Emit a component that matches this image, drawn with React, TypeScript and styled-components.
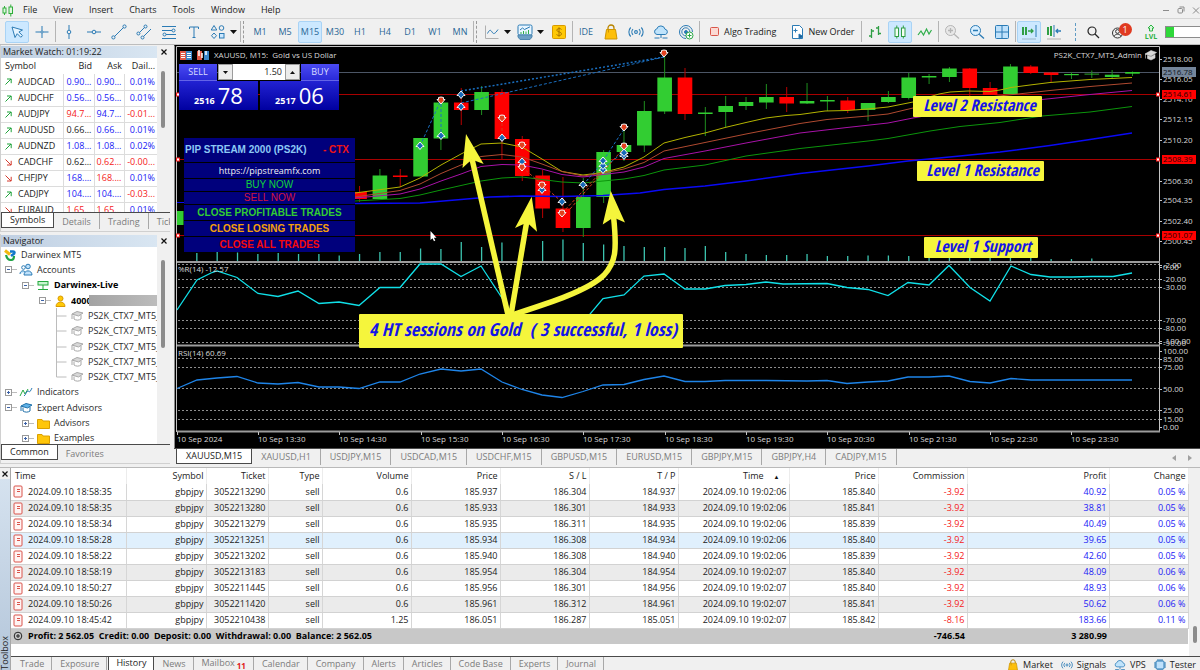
import React from 'react';
import styled, { createGlobalStyle, css } from 'styled-components';

const GlobalStyle = createGlobalStyle`
  * { box-sizing: border-box; }
  body {
    margin: 0;
    background: #f0f0f0;
    font-family: "Open Sans", "Noto Sans", sans-serif;
    font-size: 9px;
    line-height: 12px;
    color: #222;
    overflow: hidden;
  }
  button, input {
    font: inherit;
    color: inherit;
    margin: 0;
    padding: 0;
    border: 0;
    border-radius: 0;
    background: none;
  }
`;

const Page = styled.div`
  display: flex;
  flex-direction: column;
`;

/* ---------- menu bar ---------- */

const MenuBar = styled.nav`
  display: flex;
  align-items: center;
  height: 19px;
  padding: 2px 2px 0;
  border-bottom: 1px solid #d6d6d6;
`;

const MenuItem = styled.button`
  height: 15px;
  padding: 0 8px;
  color: #1c1c1c;
`;

const Logo = styled.svg`
  width: 12px;
  height: 13px;
  margin-right: 1px;
`;

const WindowButtons = styled.div`
  display: flex;
  gap: 5px;
  margin-left: auto;
  margin-right: -3px;
`;

const WindowButton = styled.button`
  width: 10px;
  height: 12px;
  svg { display: block; }
`;

/* ---------- tool bar ---------- */

const ToolBar = styled.div`
  display: flex;
  align-items: center;
  height: 26px;
  padding-left: 5px;
  gap: 1px;
  border-bottom: 1px solid #bdbdbd;
`;

const Tool = styled.button<{ $active?: boolean; $wide?: boolean }>`
  display: flex;
  align-items: center;
  justify-content: center;
  gap: 4px;
  flex: none;
  width: ${(p) => (p.$wide ? 32 : 24)}px;
  height: 22px;
  border: 1px solid ${(p) => (p.$active ? '#a9d3f5' : 'transparent')};
  border-radius: 2px;
  background: ${(p) => (p.$active ? '#cce8ff' : 'transparent')};
  color: #2a6796;
  svg { display: block; flex: none; }
`;

const TextTool = styled(Tool)`
  width: auto;
  padding: 0 4px 0 8px;
  color: #1a1a1a;
  white-space: nowrap;
`;

const Separator = styled.span`
  flex: none;
  width: 1px;
  height: 21px;
  background: #b4b4b4;
`;

const Gripper = styled.span`
  flex: none;
  width: 2px;
  height: 22px;
  margin: 0 2px 0 1px;
  border-left: 1px dashed #9a9a9a;
`;

const StatusGroup = styled.div`
  flex: 1;
  display: flex;
  align-items: center;
  height: 18px;
  gap: 2px;
  margin-left: 8px;
  padding-left: 5px;
  border-left: 1px dashed #5f9bc4;
`;

const Account = styled.span`
  position: relative;
  display: flex;
  margin-right: 6px;
`;

const Badge = styled.span`
  position: absolute;
  top: 2px;
  right: -1px;
  width: 13px;
  height: 13px;
  border-radius: 7px;
  background: #e03a20;
  color: #fff;
  line-height: 13px;
  text-align: center;
`;

const LevelMeter = styled.div`
  flex: 1;
  height: 12px;
  border: 1px solid #8c8c8c;
  border-right: 0;
  background: linear-gradient(to right, #2fd83a 8px, #fff 8px);
`;

/* ---------- docked panels ---------- */

const Workspace = styled.main`
  display: flex;
  align-items: stretch;
`;

const Dock = styled.aside`
  flex: none;
  width: 174px;
  display: flex;
  flex-direction: column;
  gap: 2px;
  padding-right: 4px;
`;

const Panel = styled.section`
  border-bottom: 1px solid #d0d0d0;
  border-left: 1px solid #d0d0d0;
`;

const PanelTitle = styled.header`
  display: flex;
  align-items: center;
  height: 13px;
  h2 {
    flex: 1;
    margin: 0;
    padding-left: 2px;
    font-size: 9px;
    font-weight: 400;
    background: linear-gradient(to right, #bfcfe2, #d9e6f2);
  }
  button {
    width: 13px;
    height: 12px;
  }
  svg { display: block; margin: auto; }
`;

const PanelBody = styled.div<{ $height: number }>`
  display: flex;
  height: ${(p) => p.$height}px;
  overflow: hidden;
  background: #fff;
`;

const ScrollTrack = styled.div<{ $offset: number }>`
  flex: none;
  width: 13px;
  padding: ${(p) => p.$offset}px 5px 0 4px;
  background: #f0f0f0;
`;

const ScrollThumb = styled.div<{ $length: number }>`
  height: ${(p) => p.$length}px;
  border-radius: 2px;
  background: #8c8c8c;
`;

const Tabs = styled.div`
  display: flex;
  height: 17px;
  overflow: hidden;
  border-top: 1px solid #4a4a4a;
`;

const Tab = styled.button<{ $active?: boolean }>`
  flex: none;
  height: 16px;
  padding: 0 8px;
  color: #7c7c7c;
  white-space: nowrap;
  line-height: 13px;
  border-right: 1px solid #a8a8a8;
  ${(p) =>
    p.$active &&
    css`
      margin-top: -1px;
      color: #1c1c1c;
      background: #fff;
      border: 1px solid #4a4a4a;
      border-top: 0;
    `}
`;

const DockTabs = styled(Tabs)`
  margin-bottom: 2px;
  button:last-child { border-right: 0; }
`;

/* ---------- market watch ---------- */

const QuoteTable = styled.table`
  flex: 1;
  table-layout: fixed;
  border-collapse: collapse;
  align-self: flex-start;
  th, td {
    height: 16px;
    padding: 0 2px;
    text-align: right;
    font-weight: 400;
    white-space: nowrap;
  }
  td {
    border-bottom: 1px solid #dcdcdc;
    border-right: 1px solid #dcdcdc;
  }
  td:last-child { border-right: 0; }
  th:first-child, td:first-child { text-align: left; padding-left: 4px; }
`;

const Quote = styled.td<{ $tone: string }>`
  color: ${(p) => p.$tone};
`;

const SymbolName = styled.span`
  display: flex;
  align-items: center;
  gap: 6px;
`;

/* ---------- navigator ---------- */

const Tree = styled.ul`
  flex: 1;
  min-width: 0;
  height: 199px;
  margin: 0;
  padding: 0;
  display: flex;
  flex-direction: column;
  list-style: none;
`;

const TreeRow = styled.li<{ $depth: number; $bold?: boolean }>`
  flex: 1;
  display: flex;
  align-items: center;
  min-width: 0;
  padding-left: ${(p) => 4 + p.$depth * 17}px;
  white-space: nowrap;
  overflow: hidden;
  font-weight: ${(p) => (p.$bold ? 700 : 400)};
  color: ${(p) => (p.$bold ? '#000' : '#2b2b2b')};
  svg { flex: none; }
`;

const TreeRoot = styled(TreeRow)`
  padding-left: 2px;
`;

const TreeIcon = styled.span`
  flex: none;
  display: flex;
  justify-content: center;
  width: 14px;
  margin-right: 4px;
`;

const Twig = styled.span`
  flex: none;
  display: flex;
  width: 14px;
`;

const AccountNumber = styled.span`
  width: 18px;
  overflow: hidden;
`;

const Redaction = styled.span`
  flex: 1;
  height: 11px;
  background: linear-gradient(to right, #a3a3a3, #bcbcbc);
`;

/* ---------- chart ---------- */

const ChartArea = styled.section`
  flex: 1;
  min-width: 0;
  display: flex;
  flex-direction: column;
`;

const ChartCanvas = styled.div`
  position: relative;
  background: #000;
  svg.plot { display: block; width: 100%; height: auto; }
`;

const Ticket = styled.form`
  position: absolute;
  left: 5px;
  top: 19px;
  width: 160px;
  display: grid;
  grid-template-columns: 38px minmax(0, 1fr) 38px;
  column-gap: 1px;
`;

const Side = styled.button`
  height: 17px;
  color: #d9dcff;
  background: linear-gradient(#4a4af2, #2a2ad8);
  border-bottom: 1px solid #6464e8;
`;

const Lots = styled.div`
  display: flex;
  height: 16px;
  background: #fff;
  button {
    flex: none;
    width: 15px;
    background: #ececec;
    border: 1px solid #9c9c9c;
  }
  svg { display: block; margin: auto; }
  input {
    flex: 1;
    width: 100%;
    min-width: 0;
    padding-right: 3px;
    text-align: right;
    color: #1c1c1c;
  }
`;

const Prices = styled.div`
  grid-column: 1 / -1;
  display: grid;
  grid-template-columns: 1fr 1fr;
  gap: 2px;
`;

const PriceButton = styled.button`
  display: flex;
  align-items: flex-end;
  justify-content: center;
  gap: 3px;
  height: 29px;
  padding-bottom: 2px;
  color: #fff;
  background: linear-gradient(#2222d2, #0000a0);
  small { font-size: 9px; font-weight: 700; line-height: 14px; }
  span { font-size: 22px; line-height: 26px; }
`;

const Robot = styled.div`
  position: absolute;
  left: 10px;
  top: 93px;
  width: 171px;
  display: flex;
  flex-direction: column;
  gap: 1px;
  font-family: "Liberation Sans", Arial, sans-serif;
  font-size: 10px;
  text-align: center;
`;

const RobotTitle = styled.div`
  display: flex;
  justify-content: space-between;
  height: 24px;
  padding: 0 6px 0 1px;
  line-height: 23px;
  font-weight: 700;
  color: #8cc8f5;
  background: #00007c;
  em { font-style: normal; color: #f01414; }
`;

const RobotLink = styled.a`
  height: 15px;
  line-height: 15px;
  font-family: "Open Sans", sans-serif;
  font-size: 9px;
  color: #f2f2f2;
  text-decoration: none;
  background: #00007c;
`;

const RobotButton = styled.button<{ $tone: string; $short?: boolean }>`
  height: ${(p) => (p.$short ? 12 : 15)}px;
  line-height: 12px;
  color: ${(p) => p.$tone};
  font-weight: ${(p) => (p.$short ? 400 : 700)};
  background: #00007c;
`;

const ChartTabs = styled(Tabs)`
  height: 18px;
  padding: 0 8px 0 2px;
  button { padding: 0 9px; line-height: 14px; }
`;

const TabArrows = styled.span`
  display: flex;
  align-items: center;
  gap: 12px;
  margin-left: auto;
`;

/* ---------- toolbox ---------- */

const Toolbox = styled.section`
  display: flex;
  height: 203px;
  margin-top: 1px;
  border-top: 1px solid #b9b9b9;
  background: #f0f0f0;
`;

const ToolboxHandle = styled.div`
  flex: none;
  width: 10px;
  display: flex;
  flex-direction: column;
  justify-content: space-between;
  align-items: center;
  background: linear-gradient(#f0f0f0 11px, #d5e2ef 11px, #b4c6da);
  button { width: 10px; height: 11px; }
  svg { display: block; margin: auto; }
  h2 {
    margin: 0;
    font-size: 9px;
    font-weight: 400;
    line-height: 10px;
    writing-mode: vertical-rl;
    transform: rotate(180deg);
  }
`;

const ToolboxMain = styled.div`
  flex: 1;
  min-width: 0;
  display: flex;
  flex-direction: column;
  border-left: 1px solid #a8a8a8;
`;

const HistoryBody = styled.div`
  display: flex;
  flex: 1;
  background: #fff;
`;

const HistoryTable = styled.table`
  flex: 1;
  align-self: flex-start;
  width: 100%;
  table-layout: fixed;
  border-collapse: collapse;
  th, td {
    height: 16px;
    padding: 0 2px;
    text-align: right;
    font-weight: 400;
    white-space: nowrap;
    border-right: 1px solid #d6d6d6;
  }
  td { border-bottom: 1px solid #d2d2d2; }
  th { border-color: #ececec; }
  th:first-child, td:first-child { text-align: left; }
  th:first-child { padding-left: 4px; }
  tfoot td {
    background: #c8c8c8;
    border: 0;
    color: #000;
    font-weight: 700;
  }
`;

const Deal = styled.tr<{ $tone: string }>`
  background: ${(p) => p.$tone};
`;

const Money = styled.td<{ $tone: string }>`
  color: ${(p) => p.$tone};
`;

const WithIcon = styled.span`
  display: flex;
  align-items: center;
  gap: 5px;
`;

const Summary = styled.span`
  white-space: pre;
`;

const SortMark = styled.span`
  margin: 0 7px 0 10px;
  font-size: 6px;
  line-height: 6px;
  color: #111;
`;

const BottomBar = styled.div`
  display: flex;
  height: 14px;
  gap: 1px;
  padding-left: 2px;
  border-top: 1px solid #4a4a4a;
  overflow: hidden;
`;

const BottomTab = styled(Tab)`
  height: 13px;
  padding: 0 7px;
  line-height: 12px;
  ${(p) =>
    p.$active &&
    css`
      height: 14px;
      border-bottom: 0;
    `}
`;

const Unread = styled.small`
  margin-left: 2px;
  font-size: 8px;
  font-weight: 700;
  line-height: 8px;
  vertical-align: sub;
  color: #e02020;
`;

const Services = styled.div`
  display: flex;
  gap: 8px;
  margin-left: auto;
  padding-right: 4px;
`;

const Service = styled.button`
  display: flex;
  align-items: center;
  gap: 4px;
  height: 15px;
`;

/* ---------- icons ---------- */

type IconProps = { children: React.ReactNode; w?: number; h?: number; color?: string; sw?: number };
const Icon = ({ children, w = 16, h = 16, color = '#2b7bb5', sw = 1 }: IconProps) => (
  <svg width={w} height={h} viewBox={`0 0 ${w} ${h}`} fill="none" stroke={color} strokeWidth={sw} aria-hidden="true">
    {children}
  </svg>
);

const Caret = () => (
  <Icon w={7} h={4} color="none"><path d="M0 0h7L3.500 4z" fill="#111" /></Icon>
);
const Cross = () => (
  <Icon w={6} h={6} color="#111" sw={1.2}><path d="M.5.5l5 5M5.500.5l-5 5" /></Icon>
);
const CursorIcon = () => (
  <Icon><path d="M3 3l3 10.500 2.200-3.800 3.600 3.600 1.700-1.700-3.600-3.600L13.500 6z" fill="#e6f4ff" strokeLinejoin="round" /></Icon>
);
const CrosshairIcon = () => (
  <Icon><path d="M8 2v4.500M8 9.500V14M1.500 8h5M9.500 8h5" /><circle cx="8" cy="8" r="1.200" /></Icon>
);
const VLineIcon = () => (<Icon><path d="M8 1v5M8 10v5" /><circle cx="8" cy="8" r="1.800" /></Icon>);
const HLineIcon = () => (<Icon><path d="M1 8h5M10 8h5" /><circle cx="8" cy="8" r="1.800" /></Icon>);
const TrendIcon = () => (
  <Icon><path d="M3.500 12.500l9-9" /><circle cx="2.400" cy="13.400" r="1.600" /><circle cx="13.500" cy="2.500" r="1.600" /></Icon>
);
const ChannelIcon = () => (
  <Icon><path d="M3.500 8.500l5-5M7.500 12.500L15 5" /><circle cx="2.400" cy="9.500" r="1.500" /><circle cx="9.500" cy="2.500" r="1.500" /><circle cx="6.500" cy="13.500" r="1.500" /></Icon>
);
const FiboIcon = () => (
  <Icon><path d="M1 2.500h14M1 6.500h10M5 10.500h10M1 14.500h14" /><circle cx="12.500" cy="6.500" r="1.500" /><circle cx="3.500" cy="10.500" r="1.500" /></Icon>
);
const TextIcon = () => (<Icon><path d="M3.500 5V3h9v2M8 3v10.500M6.500 13.500h3" /></Icon>);
const ShapesIcon = () => (
  <Icon><path d="M4 1.500L6.800 6H1.200z" /><circle cx="11.500" cy="4" r="2.300" /><path d="M4 9l2.500 2.700L4 14.500l-2.500-2.800z" /><rect x="9.500" y="9.500" width="4.500" height="4.500" fill="#cce8ff" /></Icon>
);
const LineChartIcon = () => (
  <Icon><path d="M1.500 1.500v13h13" stroke="#b0b0b0" /><path d="M3.500 9.500c2-4 3-4 4.500-1.500s3 2 6-2.500" /></Icon>
);
const IndicatorIcon = () => (
  <Icon>
    <rect x="1" y="1" width="14" height="10" rx="1.500" fill="#e8f5ff" />
    <path d="M1 11h14v2l-2 2.500H3L1 13z" fill="#6b9fc4" stroke="#4d86b0" />
    <path d="M3 6l2.500-2 2 1.500L13 2.800" />
    <path d="M4 10V8M6.500 10V7M9 10V7.500M11.500 10V6" stroke="#2fae4a" />
  </Icon>
);
const DollarIcon = () => (
  <Icon color="#d99a00">
    <rect x="1.500" y="1.500" width="13" height="13" rx="1" fill="#ffc907" />
    <path d="M10.500 5.500C9.500 4 5.800 4.200 5.800 6.200s4.700 1.400 4.700 3.600-4 2.200-5 .6M8 3.200v9.600" stroke="#a87400" />
  </Icon>
);
const BagIcon = ({ size = 16 }: { size?: number }) => (
  <svg width={size} height={size} viewBox="0 0 16 16" aria-hidden="true">
    <path d="M5 6V4a3 3 0 016 0v2" fill="none" stroke="#b88400" strokeWidth="1.300" />
    <path d="M3.500 5.500h9l1.500 9.500H2z" fill="#fdbf0a" stroke="#cf9500" />
    <path d="M5.500 5.500v3" stroke="#cf9500" />
  </svg>
);
const SignalIcon = ({ size = 16 }: { size?: number }) => (
  <svg width={size} height={size} viewBox="0 0 16 16" fill="none" stroke="#2b7bb5" strokeWidth="1.100" aria-hidden="true">
    <circle cx="8" cy="8" r="1.400" />
    <path d="M5 5.200a4 4 0 000 5.600M11 5.200a4 4 0 010 5.600M2.700 3.500a6.500 6.500 0 000 9M13.300 3.500a6.500 6.500 0 010 9" />
  </svg>
);
const CloudIcon = ({ size = 16 }: { size?: number }) => (
  <svg width={size} height={size} viewBox="0 0 16 16" fill="none" stroke="#2b7bb5" aria-hidden="true">
    <path d="M4 10.500a2.800 2.800 0 01-.3-5.500A4.300 4.300 0 0112 5.200a2.700 2.700 0 01.3 5.300z" fill="#bfe3fb" />
    <path d="M8 10.500V14M1.500 14h5M9.500 14h5" />
  </svg>
);
const RadarIcon = () => (
  <Icon>
    <path d="M8 14.500A6.500 6.500 0 1114.500 8M8 11.800A4 4 0 1111.800 8" />
    <circle cx="8" cy="8" r="1.500" fill="#2b7bb5" />
    <circle cx="11.500" cy="11.500" r="3.500" fill="#fff" stroke="#28a745" />
    <path d="M11.500 9.500v4M9.500 11.500h4" stroke="#28a745" />
  </Icon>
);
const StopIcon = () => (
  <Icon w={10} h={10} color="#d9564a"><rect x=".5" y=".5" width="8" height="8" rx="1" fill="#fbd9d3" /></Icon>
);
const NewOrderIcon = () => (
  <Icon w={13}>
    <path d="M1.500 1.500h7l3 3v10h-10z" fill="#fff" /><path d="M8 10l4 2.500-4 2.500z" fill="#1d5f96" /><path d="M4.500 4.500v4M2.500 6.500h4" />
  </Icon>
);
const BarsIcon = () => (
  <Icon color="#2f9e44" sw={1.3}><path d="M4.500 5v9M4.500 12H2M4.500 7H7M11.500 2v9M11.500 4H9M11.500 9.500H14" /></Icon>
);
const CandlesIcon = () => (
  <Icon color="#2f9e44"><rect x="3" y="4" width="3.500" height="8.500" fill="#f4fff4" /><rect x="9.500" y="4" width="3.500" height="8.500" fill="#f4fff4" /><path d="M4.800 1.500V4M4.800 12.500v2M11.300 1.500V4M11.300 12.500v2" /></Icon>
);
const ZigzagIcon = () => (
  <Icon color="#2fae4a" sw={1.200}><path d="M1 11l3-4 2.500 4L9.500 5l2.500 5 2.500-4" /></Icon>
);
const ZoomInIcon = () => (
  <Icon color="#b5b5b5"><circle cx="6.500" cy="6.500" r="5" fill="#e8e8e8" /><path d="M4 6.500h5M6.500 4v5M10.200 10.200l4.800 4.300" strokeWidth="1.300" /></Icon>
);
const ZoomOutIcon = () => (
  <Icon><circle cx="6.500" cy="6.500" r="5" fill="#d9efff" /><path d="M4 6.500h5M10.200 10.200l4.800 4.300" strokeWidth="1.300" /></Icon>
);
const TilesIcon = () => (
  <Icon><rect x="1.500" y="1.500" width="13" height="13" rx="1" fill="#bfe1fb" /><path d="M8 1.500v13M1.500 8h13" /></Icon>
);
const AutoScrollIcon = () => (
  <Icon color="#2f9e44">
    <path d="M2 3v8M5 3v8" strokeWidth="2" /><path d="M7 7h5M10 5l2 2-2 2" strokeWidth="1.300" /><path d="M15 1v12" stroke="#2b7bb5" /><path d="M1 15h14" stroke="#9ab4c8" />
  </Icon>
);
const ShiftIcon = () => (
  <Icon color="#2f9e44">
    <path d="M2 3v8M5 2v10" strokeWidth="2" /><path d="M8 1v12" stroke="#2b7bb5" /><path d="M15 7h-5M12 5l-2 2 2 2" stroke="#2b7bb5" strokeWidth="1.300" /><path d="M1 15h14" stroke="#b0b0b0" />
  </Icon>
);
const SearchIcon = () => (
  <Icon color="#222" sw={1.2}><circle cx="7" cy="7" r="4" /><path d="M10 10l4 4" /></Icon>
);
const UserIcon = () => (
  <Icon color="#333"><circle cx="6.500" cy="9" r="5" /><circle cx="6.500" cy="7.500" r="1.900" /><path d="M3 12.500c1-3 6-3 7 0" /></Icon>
);
const LevelIcon = () => (
  <svg width="14" height="16" viewBox="0 0 14 16" aria-hidden="true">
    <path d="M7 1l3 3H8.500v3h-3V4H4z" fill="#d8f8dc" stroke="#2fb344" />
    <text x="7" y="15" textAnchor="middle" fontSize="7" fontWeight="700" fill="#2fb344">LVL</text>
  </svg>
);
const TicketIcon = () => (
  <Icon w={10} h={13} color="#d9534a"><rect x="1" y="1" width="8" height="11" rx="1" fill="#fff4f3" /><path d="M4 4.500h3M4 6.500h3" /></Icon>
);
const PlusRound = () => (
  <Icon w={10} h={10} color="#222"><circle cx="5" cy="5" r="3.800" /><path d="M5 3v4M3 5h4" /></Icon>
);
const Trend = ({ up }: { up: boolean }) => (
  <Icon w={7} h={7} color={up ? '#1fa33a' : '#d43a2f'}>
    {up ? <path d="M.5 6.500l5.500-5.500M2 1h4.200v4.200" /> : <path d="M.5.5l5.500 5.500M2 6h4.200V1.800" />}
  </Icon>
);
const Expander = ({ open }: { open: boolean }) => (
  <Icon w={13} h={9} color="#9a9a9a"><rect x=".5" y="1.500" width="6" height="6" fill="#fff" /><path d={open ? 'M2 4.500h3' : 'M2 4.500h3M3.500 3v3'} stroke="#3c62a8" /><path d="M7 4.500h5" stroke="#bcbcbc" /></Icon>
);
const Branch = ({ last }: { last: boolean }) => (
  <Icon w={14} h={16} color="#bcbcbc"><path d={last ? 'M.5 0v8h10' : 'M.5 0v16M.5 8h10'} /></Icon>
);
const CapIcon = ({ tint = '#a8a8a8', fill = '#d8d8d8' }: { tint?: string; fill?: string }) => (
  <Icon w={14} h={12} color={tint}><path d="M2 4l5-2.500 6 1.500-4.500 3z" fill={fill} /><path d="M4 5.500V9c2 1.500 5 1.500 7 0V5M2 4v5" /></Icon>
);
const PeopleIcon = () => (
  <Icon w={14} h={13}><circle cx="9" cy="3.500" r="2.300" fill="#bfe1fb" /><circle cx="4.500" cy="4.500" r="1.800" /><path d="M1 11c0-3.500 4-4 5-2M5 12c0-5.500 8-5.500 8 0z" fill="#bfe1fb" /></Icon>
);
const ServerIcon = () => (
  <Icon w={12} h={11} color="#25a93f"><rect x="1" y="1.500" width="10" height="3.500" fill="#c9f5d0" /><path d="M6 5v4M1 9.500h10" /></Icon>
);
const PersonIcon = () => (
  <Icon w={11} h={12} color="#d99a00"><circle cx="5.500" cy="3.500" r="2.500" fill="#ffc907" /><path d="M1 11.500c0-6 9-6 9 0z" fill="#ffc907" /></Icon>
);
const IndicatorsIcon = () => (
  <Icon w={14} h={12} color="#25a93f"><path d="M1 10l3-6 2 4 3-5" /><path d="M5 10c2-1 2-5 4-5s1 3 4-3" stroke="#2b7bb5" /></Icon>
);
const FolderIcon = () => (
  <Icon w={13} h={11} color="#dba000"><path d="M.5 1.500h4.500l1 1.500h6.500v7.500H.5z" fill="#ffc60a" /></Icon>
);
const DarwinexIcon = () => (
  <svg width="12" height="12" viewBox="0 0 12 12" aria-hidden="true">
    <path d="M1 1.500l5 4" stroke="#f2b90f" strokeWidth="3" /><path d="M6 2.500h3c2 0 2 2.500 0 3L7 7" fill="none" stroke="#1377c9" strokeWidth="2.500" />
    <path d="M2 6c1 4 3 5 5 5s3-2 3-4" fill="none" stroke="#22a447" strokeWidth="2.200" />
  </svg>
);
const ChipIcon = () => (
  <svg width="12" height="12" viewBox="0 0 12 12" aria-hidden="true">
    <rect x="2" y="2" width="8" height="8" rx="1" fill="#bfe1fb" stroke="#2b7bb5" />
    <path d="M4 0v2M6 0v2M8 0v2M4 10v2M6 10v2M8 10v2M0 4h2M0 6h2M0 8h2M10 4h2M10 6h2M10 8h2" stroke="#2b7bb5" />
  </svg>
);

/* ---------- data ---------- */

const BLUE = '#2020f5';
const RED = '#f52020';
const DARK = '#222';

const quotes: [string, boolean, string, string, string, string, string, string][] = [
  ['AUDCAD', true, '0.90...', BLUE, '0.90...', BLUE, '0.01%', BLUE],
  ['AUDCHF', true, '0.56...', BLUE, '0.56...', BLUE, '0.01%', BLUE],
  ['AUDJPY', true, '94.7...', RED, '94.7...', BLUE, '-0.01...', RED],
  ['AUDUSD', true, '0.66...', DARK, '0.66...', BLUE, '0.01%', BLUE],
  ['AUDNZD', true, '1.08...', BLUE, '1.08...', BLUE, '0.02%', BLUE],
  ['CADCHF', false, '0.62...', DARK, '0.62...', RED, '-0.00...', RED],
  ['CHFJPY', false, '168....', BLUE, '168....', RED, '0.01%', BLUE],
  ['CADJPY', true, '104....', BLUE, '104....', BLUE, '-0.03...', RED],
  ['EURAUD', false, '1.65...', RED, '1.65...', RED, '0.01%', BLUE],
];

const deals = [
  ['2024.09.10 18:58:35', '3052213290', '0.6', '185.937', '186.304', '184.937', '2024.09.10 19:02:06', '185.840', '-3.92', '40.92', '0.05 %'],
  ['2024.09.10 18:58:35', '3052213280', '0.6', '185.933', '186.301', '184.933', '2024.09.10 19:02:06', '185.841', '-3.92', '38.81', '0.05 %'],
  ['2024.09.10 18:58:34', '3052213279', '0.6', '185.935', '186.311', '184.935', '2024.09.10 19:02:06', '185.839', '-3.92', '40.49', '0.05 %'],
  ['2024.09.10 18:58:28', '3052213251', '0.6', '185.934', '186.308', '184.934', '2024.09.10 19:02:06', '185.840', '-3.92', '39.65', '0.05 %'],
  ['2024.09.10 18:58:22', '3052213202', '0.6', '185.940', '186.308', '184.940', '2024.09.10 19:02:06', '185.839', '-3.92', '42.60', '0.05 %'],
  ['2024.09.10 18:58:19', '3052213183', '0.6', '185.954', '186.304', '184.954', '2024.09.10 19:02:07', '185.840', '-3.92', '48.09', '0.06 %'],
  ['2024.09.10 18:50:27', '3052211445', '0.6', '185.956', '186.301', '184.956', '2024.09.10 19:02:07', '185.840', '-3.92', '48.93', '0.06 %'],
  ['2024.09.10 18:50:26', '3052211420', '0.6', '185.961', '186.312', '184.961', '2024.09.10 19:02:07', '185.841', '-3.92', '50.62', '0.06 %'],
  ['2024.09.10 18:45:42', '3052210438', '1.25', '186.051', '186.287', '185.051', '2024.09.10 19:02:07', '185.842', '-8.16', '183.66', '0.11 %'],
];
const rowTone = (i: number) => (i === 3 ? '#e0f0fd' : i % 2 ? '#ebebeb' : '#fff');
const columnWidths = [115, 80, 62, 54, 89, 89, 89, 89, 111, 89, 89, 142, 79];

/* index, direction, body top, body bottom, wick top, wick bottom */
const candles: [number, 'u' | 'd', number, number, number, number][] = [
  [0, 'u', 211, 225, 211, 225],
  [9, 'd', 192, 199, 186, 202], [10, 'u', 175.5, 199, 169, 199], [11, 'd', 175.5, 177, 169, 187],
  [12, 'u', 138, 176.5, 138, 176], [13, 'u', 102.5, 138.5, 97, 150], [14, 'd', 102.5, 110, 88, 125],
  [15, 'u', 92, 110, 86, 115], [16, 'd', 92, 139, 89, 159], [17, 'd', 139, 176, 136, 181],
  [18, 'd', 175.5, 208.5, 170, 218], [19, 'd', 208.5, 228, 177, 232], [20, 'u', 197, 228, 178, 237],
  [21, 'u', 152, 197, 150, 203], [22, 'u', 145, 152, 128, 161], [23, 'u', 111, 145.5, 101, 152],
  [24, 'u', 77.5, 111.5, 55, 114], [25, 'd', 77.5, 114, 68, 120], [26, 'u', 112.500, 114, 107, 136],
  [27, 'u', 106, 112, 96, 127], [28, 'u', 102, 106, 97, 110], [29, 'u', 97, 102.5, 84, 109],
  [30, 'd', 97, 103.5, 87, 112], [31, 'u', 101, 103.5, 83, 104], [32, 'u', 100, 101.500, 96, 111],
  [33, 'd', 100.5, 110, 97, 113], [34, 'u', 103, 110, 103, 121], [35, 'u', 97, 102, 91, 103],
  [36, 'u', 77.5, 98, 73, 99.5], [37, 'u', 76, 77.500, 74, 84], [38, 'u', 68.500, 77, 67, 82],
  [39, 'd', 68.500, 88, 68, 96], [40, 'd', 88, 95, 82, 95], [41, 'u', 66.5, 94, 64, 94],
  [42, 'd', 66.5, 73, 65, 74], [43, 'd', 72.500, 75, 72, 82], [44, 'u', 74, 75.200, 72, 79],
  [45, 'u', 73.700, 74.500, 70.500, 78], [46, 'u', 74.700, 77, 70, 79], [47, 'u', 72, 73.700, 71.500, 76],
];
const barX = (i: number) => 176.5 + 20.34 * i;

const volumes = [
  253, 252, 252.500, 254, 253, 254, 254, 255.500, 254, 252, 252, 248.500, 249, 242, 247, 242.500, 243, 241, 239.500, 243,
  244.500, 246, 247, 247, 248, 246, 252, 254, 255, 255, 254, 256, 256, 255.500, 255.500, 256, 257, 257, 257, 257, 257, 257, 259, 259, 258.500,
];

const averages: [string, number, string][] = [
  ['#b3b300', 1, '355,193 400,187 420,178 441,165 461,154 481,144 502,143 522,147 542,159 562,171.500 583,175 603,172.500 624,167 644,157 664,143 685,137.500 705,133 725,127.500 746,122.500 766,118 786,115.500 800,114.500 825,111 847,110.500 868,109 888,107 913,102 939,94 950,92 968,91 990,91.500 1000,90 1011,87.500 1030,85 1050,82.500 1090,79.500 1132,77.500'],
  ['#b04a30', 1, '355,197 400,190.500 420,184 441,173.500 461,165 481,156.500 502,154.500 522,157 542,164 562,171.500 583,176 603,173 624,169 644,162.500 664,151 705,142.500 746,134 800,123.500 827,119.500 868,116 888,114 913,108 960,100 1018,94 1050,90.500 1090,86.500 1132,83'],
  ['#a812a8', 1, '355,198 400,194 420,189 441,181 461,174 481,166.500 502,164.500 522,165 542,169 562,174.500 583,177 603,174.500 624,172 644,167 664,158.500 705,151 746,143 800,133 847,127.500 888,123 913,118 970,108 1042,99.500 1090,94.500 1132,90.500'],
  ['#0c950c', 1, '355,201 400,198.500 420,195 441,190 461,185.500 481,181 502,178 522,177 542,179.500 562,182 583,183 603,181 624,179 644,175.500 664,170 705,165 746,156 800,148.500 868,141 888,138.500 930,131 960,126.500 1000,122.500 1042,116 1090,112 1132,106.500'],
  ['#0a0af5', 1.500, '355,203.500 420,203 461,199.500 490,197 522,196 562,196.500 603,195.500 640,193 664,189.500 705,186 746,181 800,173.500 868,166 908,161 960,156 1000,152 1050,145.500 1090,139.500 1132,133'],
];

const williams =
  '177,310 197,280 211,273 217,271 237,277.500 258,293.500 278,296.500 298,291 319,303.500 339,302 359,305.500 380,287.500 400,287.500 420,264 441,264 461,276.500 481,266 502,298 522,330 583,330 590,314 603,298.500 624,295 644,276 664,274 685,289 705,289 725,285.500 746,284.500 766,282 783,284 827,283.500 847,287.500 868,289.500 888,295.500 908,282.500 929,285 949,265.500 970,287.500 990,301 1011,266 1031,274.500 1050,277 1072,277 1092,276.500 1113,276.500 1132,273';
const rsi =
  '177,388.500 197,380 217,378 237,376.500 258,383 278,384 298,382.500 319,387 339,387 359,388.500 380,382 400,382 420,374 441,369 461,371 481,369 502,382 522,389.500 542,395 562,397.500 583,391.500 603,385 624,384.500 644,379.500 664,376 685,381.500 705,381.500 725,380.500 766,380.500 807,381 827,380.500 847,383.500 868,382 888,381 908,377 929,377 949,376 970,381.500 990,383 1011,378.500 1031,380 1132,380';

const buys: [number, number][] = [
  [420, 146], [441, 136], [461, 95], [461, 107], [502, 138], [522, 162], [542, 190], [562, 202], [583, 185],
  [603, 170], [603, 166], [603, 161], [624, 156], [624, 153],
];
const sells: [number, number][] = [
  [441, 100], [502, 118], [522, 145], [522, 167], [542, 185], [562, 213], [624, 127], [624, 146], [664, 53],
];

const priceScale: [string, number][] = [
  ['2518.00', 59], ['2516.05', 79], ['2514.10', 99], ['2512.15', 119], ['2510.20', 140], ['2506.30', 181],
  ['2504.35', 200], ['2502.40', 221], ['2500.45', 241], ['-2.00', 265], ['0.00', 267], ['-20.00', 279], ['-30.00', 287],
  ['-70.00', 320], ['-80.00', 328], ['-90.00', 343], ['-100.00', 341], ['100.00', 351], ['85.00', 359], ['75.00', 367],
  ['50.00', 389], ['25.00', 410], ['15.00', 419], ['0.00', 427],
];
const guides = [264, 279, 287, 320, 328, 342, 358, 367, 388, 410, 419];
const times = ['10 Sep 2024', '10 Sep 13:30', '10 Sep 14:30', '10 Sep 15:30', '10 Sep 16:30', '10 Sep 17:30', '10 Sep 18:30', '10 Sep 19:30', '10 Sep 20:30', '10 Sep 21:30', '10 Sep 22:30', '10 Sep 23:30'];
const levels: [number, string][] = [[94, '2514.61'], [159, '2508.39'], [235, '2501.07']];

const CalloutText = styled.text`
  font-family: "Open Sans Condensed", "Roboto Condensed", Roboto, sans-serif;
  font-weight: 500;
  font-style: italic;
  fill: #1414e6;
  text-anchor: middle;
  white-space: pre;
`;

const AxisText = styled.text<{ $tone?: string }>`
  font-size: 8px;
  fill: ${(p) => p.$tone ?? '#d8d8d8'};
`;

type CalloutProps = { x: number; y: number; w: number; h: number; size: number; text: string };
const Callout = ({ x, y, w, h, size, text }: CalloutProps) => (
  <g>
    <rect x={x} y={y} width={w} height={h} rx="1" fill="#f5f53c" />
    <CalloutText x={x + w / 2 + 2} y={y + h / 2 + size * 0.3} fontSize={size}>{text}</CalloutText>
  </g>
);

const Marker = ({ x, y, up }: { x: number; y: number; up: boolean }) => (
  <path
    transform={`translate(${x} ${y})`}
    d={up ? 'M0-4L4 .5H2.500L0 3.500-2.500.5H-4z' : 'M0 4L4-.5H2.500V-2.500L0-3-2.500-2.500V-.5H-4z'}
    fill={up ? '#1668b8' : '#e2401e'}
    stroke="#f5f5f5"
    strokeWidth="1"
  />
);

const Plot = () => (
  <svg className="plot" viewBox="174 45 1026 403" role="img" aria-label="XAUUSD M15 candlestick chart">
    <rect x="174" y="45" width="1026" height="403" fill="#000" />
    <path d="M174.500 448V45.500" stroke="#8a8a8a" />

    <path d="M177 72.500h982" stroke="#4c5666" />
    {levels.map(([y]) => <path key={y} d={`M177 ${y + 0.5}h982`} stroke="#a80000" />)}
    <path d="M177 202.500h8" stroke="#0a0af5" />

    {volumes.map((top, i) => <path key={i} d={`M${barX(i + 1)} 261.500V${top}`} stroke="#3cc4b0" strokeWidth="1.300" />)}

    {candles.map(([i, dir, top, bottom, high, low]) => {
      const x = barX(i);
      const left = i === 0 ? x : x - 7.3;
      return (
        <g key={i}>
          <path d={`M${x} ${high}V${low}`} stroke={dir === 'u' ? '#1f8f1f' : '#b80000'} />
          <rect x={left} y={top} width={i === 0 ? 7 : 14.6} height={bottom - top} fill={dir === 'u' ? '#32cd32' : '#ff0000'} />
        </g>
      );
    })}

    {averages.map(([color, width, points]) => <polyline key={color} points={points} fill="none" stroke={color} strokeWidth={width} />)}

    <g fill="none" stroke="#1a6fc0">
      <path d="M461 91L664 57" strokeWidth="1.500" strokeDasharray="2 2" />
      <path d="M461 103L664 57M420 146L441 100M441 104V132M583 185L603 162M603 161L624 129M603 168L624 152" strokeDasharray="3 2" />
    </g>
    <path d="M502 118v18M522 167L562 202M570 209L624 148M562 213L603 170" fill="none" stroke="#d23a1c" strokeDasharray="3 2" />
    {buys.map(([x, y]) => <Marker key={`b${x}-${y}`} x={x} y={y} up />)}
    {sells.map(([x, y]) => <Marker key={`s${x}-${y}`} x={x} y={y} up={false} />)}

    {guides.map((y) => <path key={y} d={`M178 ${y + 0.5}h982`} stroke="#8e8e8e" strokeDasharray="2 2" />)}
    <polyline points={williams} fill="none" stroke="#10e0e8" strokeWidth="1.300" />
    <polyline points={rsi} fill="none" stroke="#1e84e8" strokeWidth="1.300" />

    <g stroke="#9c9c9c" fill="none">
      <path d="M176.500 432V46.500H1159.500V432" stroke="#c4c4c4" />
      <path d="M177 262h983M177 345.500h983" strokeWidth="2" />
      <path d="M177 431.500h983" strokeWidth="2" />
    </g>

    {times.map((t, i) => {
      const x = Math.round(barX(i * 4));
      return (
        <g key={t}>
          <path d={`M${x + 0.5} 432v3`} stroke="#c4c4c4" />
          <AxisText x={x} y="442">{t}</AxisText>
        </g>
      );
    })}
    {priceScale.map(([label, y], i) => (
      <g key={i}>
        <path d={`M1160 ${y + 0.500}h2`} stroke="#c4c4c4" />
        <AxisText x="1163" y={y + 3}>{label}</AxisText>
      </g>
    ))}
    <rect x="1162" y="67" width="34" height="10" fill="#74859a" />
    <AxisText x="1163" y="75" $tone="#10161e">2516.78</AxisText>
    {levels.map(([y, label]) => (
      <g key={label}>
        <rect x="1162" y={y - 4} width="34" height="9" fill="#ff0000" />
        <AxisText x="1163" y={y + 3} $tone="#2a0000">{label}</AxisText>
        <rect x="176.500" y={y - 1} width="3" height="3" fill="#fff" stroke="#ff2020" />
        <rect x="1156.500" y={y - 1} width="3" height="3" fill="#fff" stroke="#ff2020" />
      </g>
    ))}

    <path d="M180 51h6v9h-6z" fill="#e05a48" />
    <path d="M186 51h6v9h-6z" fill="#3c86c8" />
    <path d="M181 53.500h4M181 55.500h4M181 57.500h4M187 53.500h4M187 55.500h4M187 57.500h4" stroke="#fff" />
    <path d="M197 51h5v9h-5z" fill="#e05a48" />
    <path d="M204 51h5v9h-5z" fill="#3c86c8" />
    <path d="M199 50v6M202 53v5M206 51v4" stroke="#fff" strokeWidth="1.500" />
    <AxisText x="214" y="58">XAUUSD, M15:&#160; Gold vs US Dollar</AxisText>
    <AxisText x="1142" y="58" textAnchor="end">PS2K_CTX7_MT5_Admin</AxisText>
    <path d="M1145 54l6-3.500 5.500 2-5.500 3.500zM1147.500 55.500l3.500 1.200 4-2.200v3.500l-4 2-3.500-1.500zM1145.500 54v4.500" fill="#d8d8d8" stroke="#d8d8d8" strokeWidth=".6" />
    <AxisText x="178" y="272">%R(14) -12.57</AxisText>
    <AxisText x="178" y="356">RSI(14) 60.69</AxisText>

    <g fill="#f5f53c">
      <path d="M466 134L483.700 164 471.700 159.500 462.500 168z" />
      <path d="M531.700 196.700L537 231.700 527 222.500 515 228z" />
      <path d="M610.700 190.700L625 222.500 613.500 217.500 602.700 224.500z" />
    </g>
    <g fill="none" stroke="#f5f53c" strokeWidth="5.500">
      <path d="M472 159L508 315" />
      <path d="M527 220L511 315" />
      <path d="M613.500 216C617 250 616 262 604 275C588 291 546 304 512 315" />
    </g>
    <Callout x={359} y={314} w={324} h={34} size={18} text={'4 HT sessions on Gold \u00a0( 3 successful, 1 loss)'} />
    <Callout x={913} y={96} w={129} h={21} size={16} text="Level 2 Resistance" />
    <Callout x={917} y={161} w={127} h={20} size={16} text="Level 1 Resistance" />
    <Callout x={924} y={237} w={114} h={21} size={16} text="Level 1 Support" />

    <path d="M430.500 231v9l2-1.700 1.500 3 1.300-.7-1.400-2.900h2.600z" fill="#fff" />
  </svg>
);

const chartTabs = ['XAUUSD,M15', 'XAUUSD,H1', 'USDJPY,M15', 'USDCAD,M15', 'USDCHF,M15', 'GBPUSD,M15', 'EURUSD,M15', 'GBPJPY,M15', 'GBPJPY,H4', 'CADJPY,M15'];
const toolboxTabs = ['Trade', 'Exposure', 'History', 'News', 'Mailbox', 'Calendar', 'Company', 'Alerts', 'Articles', 'Code Base', 'Experts', 'Journal'];
const stop = (e: React.FormEvent) => e.preventDefault();

const MarketWatch = () => (
  <Panel>
    <PanelTitle>
      <h2>Market Watch: 01:19:22</h2>
      <button aria-label="Close Market Watch"><Cross /></button>
    </PanelTitle>
    <PanelBody $height={154}>
      <QuoteTable>
        <colgroup>
          <col width="62" /><col width="31" /><col width="30" /><col width="33" />
        </colgroup>
        <thead>
          <tr><th>Symbol</th><th>Bid</th><th>Ask</th><th>Dail...</th></tr>
        </thead>
        <tbody>
          {quotes.map(([name, up, bid, bidTone, ask, askTone, daily, dailyTone]) => (
            <tr key={name}>
              <td><SymbolName><Trend up={up} />{name}</SymbolName></td>
              <Quote $tone={bidTone}>{bid}</Quote>
              <Quote $tone={askTone}>{ask}</Quote>
              <Quote $tone={dailyTone}>{daily}</Quote>
            </tr>
          ))}
        </tbody>
      </QuoteTable>
      <ScrollTrack $offset={13}><ScrollThumb $length={57} /></ScrollTrack>
    </PanelBody>
    <DockTabs>
      <Tab $active>Symbols</Tab>
      <Tab>Details</Tab>
      <Tab>Trading</Tab>
      <Tab>Ticks</Tab>
    </DockTabs>
  </Panel>
);

const TreeToggle = ({ open }: { open: boolean }) => (
  <Twig><Expander open={open} /></Twig>
);

const Navigator = () => (
  <Panel>
    <PanelTitle>
      <h2>Navigator</h2>
      <button aria-label="Close Navigator"><Cross /></button>
    </PanelTitle>
    <PanelBody $height={197}>
      <Tree>
        <TreeRoot $depth={0}><TreeIcon><DarwinexIcon /></TreeIcon>Darwinex MT5</TreeRoot>
        <TreeRow $depth={0}><TreeToggle open /><TreeIcon><PeopleIcon /></TreeIcon>Accounts</TreeRow>
        <TreeRow $depth={1} $bold><TreeToggle open /><TreeIcon><ServerIcon /></TreeIcon>Darwinex-Live</TreeRow>
        <TreeRow $depth={2} $bold>
          <TreeToggle open /><TreeIcon><PersonIcon /></TreeIcon>
          <AccountNumber>4000</AccountNumber><Redaction />
        </TreeRow>
        {[0, 1, 2, 3, 4].map((i) => (
          <TreeRow key={i} $depth={3}>
            <Twig><Branch last={i === 4} /></Twig><TreeIcon><CapIcon /></TreeIcon>PS2K_CTX7_MT5_
          </TreeRow>
        ))}
        <TreeRow $depth={0}><TreeToggle open={false} /><TreeIcon><IndicatorsIcon /></TreeIcon>Indicators</TreeRow>
        <TreeRow $depth={0}><TreeToggle open /><TreeIcon><CapIcon tint="#1d6fa8" fill="#5fb2e8" /></TreeIcon>Expert Advisors</TreeRow>
        <TreeRow $depth={1}><TreeToggle open={false} /><TreeIcon><FolderIcon /></TreeIcon>Advisors</TreeRow>
        <TreeRow $depth={1}><TreeToggle open={false} /><TreeIcon><FolderIcon /></TreeIcon>Examples</TreeRow>
      </Tree>
      <ScrollTrack $offset={13}><ScrollThumb $length={88} /></ScrollTrack>
    </PanelBody>
    <DockTabs>
      <Tab $active>Common</Tab>
      <Tab>Favorites</Tab>
    </DockTabs>
  </Panel>
);

const OrderTicket = () => (
  <Ticket onSubmit={stop}>
    <Side type="button">SELL</Side>
    <Lots>
      <button type="button" aria-label="Decrease volume"><Icon w={5} h={3} color="none"><path d="M0 0h5L2.500 3z" fill="#111" /></Icon></button>
      <input aria-label="Volume" defaultValue="1.50" />
      <button type="button" aria-label="Increase volume"><Icon w={5} h={3} color="none"><path d="M0 3h5L2.500 0z" fill="#111" /></Icon></button>
    </Lots>
    <Side type="button">BUY</Side>
    <Prices>
      <PriceButton type="button"><small>2516</small><span>78</span></PriceButton>
      <PriceButton type="button"><small>2517</small><span>06</span></PriceButton>
    </Prices>
  </Ticket>
);

const History = () => (
  <HistoryTable>
    <colgroup>{columnWidths.map((w, i) => <col key={i} width={w} />)}</colgroup>
    <thead>
      <tr>
        <th>Time</th><th>Symbol</th><th>Ticket</th><th>Type</th><th>Volume</th><th>Price</th><th>S / L</th><th>T / P</th>
        <th>Time<SortMark>▲</SortMark></th><th>Price</th><th>Commission</th><th>Profit</th><th>Change</th>
      </tr>
    </thead>
    <tbody>
      {deals.map(([opened, ticket, volume, price, sl, tp, closed, closePrice, commission, profit, change], i) => (
        <Deal key={ticket} $tone={rowTone(i)}>
          <td><WithIcon><TicketIcon />{opened}</WithIcon></td>
          <td>gbpjpy</td><td>{ticket}</td><td>sell</td><td>{volume}</td><td>{price}</td><td>{sl}</td><td>{tp}</td>
          <td>{closed}</td><td>{closePrice}</td>
          <Money $tone={RED}>{commission}</Money>
          <Money $tone={BLUE}>{profit}</Money>
          <Money $tone={BLUE}>{change}</Money>
        </Deal>
      ))}
    </tbody>
    <tfoot>
      <tr>
        <td colSpan={10}>
          <WithIcon>
            <PlusRound />
            <Summary>{'Profit: 2 562.05  Credit: 0.00  Deposit: 0.00  Withdrawal: 0.00  Balance: 2 562.05'}</Summary>
          </WithIcon>
        </td>
        <td>-746.54</td><td>3 280.99</td><td />
      </tr>
    </tfoot>
  </HistoryTable>
);

export default function App() {
  return (
    <Page>
      <GlobalStyle />
      <MenuBar>
        <Logo viewBox="0 0 12 13" fill="#dff7df" stroke="#2fae3a" aria-hidden="true">
          <rect x="1" y="4" width="3" height="5" /><path d="M2.500 2v2M2.500 9v2" />
          <rect x="7" y="3" width="3.500" height="6.500" /><path d="M8.800 .5V3M8.800 9.500v3" />
        </Logo>
        {['File', 'View', 'Insert', 'Charts', 'Tools', 'Window', 'Help'].map((m) => <MenuItem key={m}>{m}</MenuItem>)}
        <WindowButtons>
          <WindowButton aria-label="Minimize"><Icon w={10} h={12} color="#8c8c8c"><path d="M2 6.500h6" /></Icon></WindowButton>
          <WindowButton aria-label="Restore"><Icon w={10} h={12} color="#8c8c8c"><rect x="2" y="4.500" width="4.500" height="4.500" rx="1" /><path d="M3.500 3h4.500v4.500" /></Icon></WindowButton>
          <WindowButton aria-label="Close"><Icon w={10} h={12} color="#8c8c8c"><path d="M2 3.500l6 6M8 3.500l-6 6" /></Icon></WindowButton>
        </WindowButtons>
      </MenuBar>

      <ToolBar>
        <Tool $active aria-label="Cursor"><CursorIcon /></Tool>
        <Tool aria-label="Crosshair"><CrosshairIcon /></Tool>
        <Separator />
        <Tool aria-label="Vertical line"><VLineIcon /></Tool>
        <Tool aria-label="Horizontal line"><HLineIcon /></Tool>
        <Tool aria-label="Trend line"><TrendIcon /></Tool>
        <Tool aria-label="Channel"><ChannelIcon /></Tool>
        <Tool aria-label="Fibonacci"><FiboIcon /></Tool>
        <Tool aria-label="Text"><TextIcon /></Tool>
        <Tool $wide aria-label="Shapes"><ShapesIcon /><Caret /></Tool>
        <Separator />
        <Gripper />
        {['M1', 'M5', 'M15', 'M30', 'H1', 'H4', 'D1', 'W1', 'MN'].map((t) => <Tool key={t} $active={t === 'M15'}>{t}</Tool>)}
        <Separator />
        <Gripper />
        <Tool $wide aria-label="Chart type"><LineChartIcon /><Caret /></Tool>
        <Tool $wide aria-label="Indicators"><IndicatorIcon /><Caret /></Tool>
        <Tool aria-label="Trading"><DollarIcon /></Tool>
        <Separator />
        <Tool>IDE</Tool>
        <Tool aria-label="Market"><BagIcon /></Tool>
        <Tool aria-label="Signals"><SignalIcon /></Tool>
        <Tool aria-label="VPS"><CloudIcon /></Tool>
        <Tool aria-label="Copy trading"><RadarIcon /></Tool>
        <Separator />
        <TextTool><StopIcon />Algo Trading</TextTool>
        <TextTool><NewOrderIcon />New Order</TextTool>
        <Separator />
        <Tool aria-label="Bar chart"><BarsIcon /></Tool>
        <Tool $active aria-label="Candlesticks"><CandlesIcon /></Tool>
        <Tool aria-label="Line chart"><ZigzagIcon /></Tool>
        <Separator />
        <Tool aria-label="Zoom in"><ZoomInIcon /></Tool>
        <Tool aria-label="Zoom out"><ZoomOutIcon /></Tool>
        <Tool aria-label="Tile windows"><TilesIcon /></Tool>
        <Separator />
        <Tool $active aria-label="Auto scroll"><AutoScrollIcon /></Tool>
        <Tool aria-label="Chart shift"><ShiftIcon /></Tool>
        <StatusGroup>
          <Tool aria-label="Search"><SearchIcon /></Tool>
          <Account>
            <Tool aria-label="Notifications"><UserIcon /></Tool>
            <Badge>1</Badge>
          </Account>
          <Tool aria-label="Level"><LevelIcon /></Tool>
          <LevelMeter />
        </StatusGroup>
      </ToolBar>

      <Workspace>
        <Dock>
          <MarketWatch />
          <Navigator />
        </Dock>
        <ChartArea>
          <ChartCanvas>
            <Plot />
            <OrderTicket />
            <Robot>
              <RobotTitle><span>PIP STREAM 2000 (PS2K)</span><em>- CTX</em></RobotTitle>
              <RobotLink href="https://pipstreamfx.com">https://pipstreamfx.com</RobotLink>
              <RobotButton $tone="#12d23c" $short>BUY NOW</RobotButton>
              <RobotButton $tone="#d2143c" $short>SELL NOW</RobotButton>
              <RobotButton $tone="#32cd32">CLOSE PROFITABLE TRADES</RobotButton>
              <RobotButton $tone="#f5a00a">CLOSE LOSING TRADES</RobotButton>
              <RobotButton $tone="#f50a0a">CLOSE ALL TRADES</RobotButton>
            </Robot>
          </ChartCanvas>
          <ChartTabs>
            {chartTabs.map((t, i) => <Tab key={t} $active={i === 0}>{t}</Tab>)}
            <TabArrows>
              <Icon w={4} h={6} color="none"><path d="M4 0v6L0 3z" fill="#a0a0a0" /></Icon>
              <Icon w={4} h={6} color="none"><path d="M0 0v6l4-3z" fill="#a0a0a0" /></Icon>
            </TabArrows>
          </ChartTabs>
        </ChartArea>
      </Workspace>

      <Toolbox>
        <ToolboxHandle>
          <button aria-label="Close Toolbox"><Cross /></button>
          <h2>Toolbox</h2>
        </ToolboxHandle>
        <ToolboxMain>
          <HistoryBody>
            <History />
            <ScrollTrack $offset={158}><ScrollThumb $length={17} /></ScrollTrack>
          </HistoryBody>
          <BottomBar>
            {toolboxTabs.map((t) => (
              <BottomTab key={t} $active={t === 'History'}>{t}{t === 'Mailbox' && <Unread>11</Unread>}</BottomTab>
            ))}
            <Services>
              <Service><BagIcon size={12} />Market</Service>
              <Service><SignalIcon size={12} />Signals</Service>
              <Service><CloudIcon size={12} />VPS</Service>
              <Service><ChipIcon />Tester</Service>
            </Services>
          </BottomBar>
        </ToolboxMain>
      </Toolbox>
    </Page>
  );
}
